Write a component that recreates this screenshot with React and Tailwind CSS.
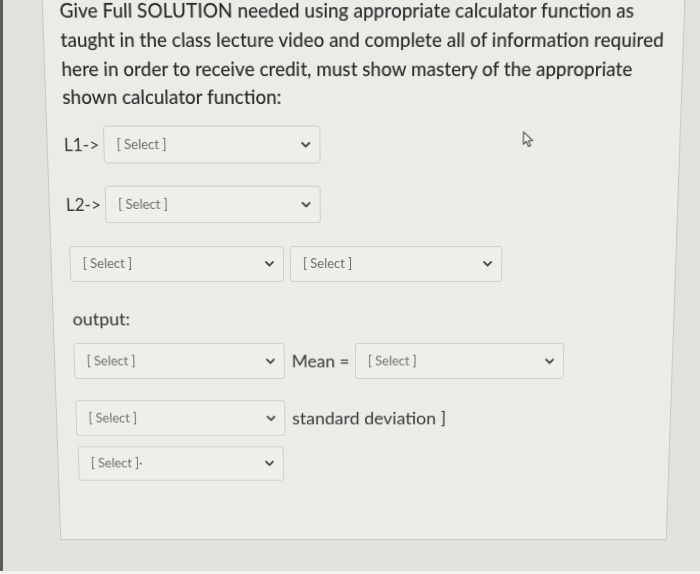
import React from "react";

const FONT = { fontFamily: "Lato, 'Open Sans', sans-serif" };

function Chevron() {
  return (
    <svg width="9" height="6" viewBox="0 0 9 6" className="shrink-0">
      <path d="M1 1l3.5 3.5L8 1" fill="none" stroke="#4b4b4b" strokeWidth="1.8" strokeLinecap="round" strokeLinejoin="round" />
    </svg>
  );
}

function Pick({ w = "w-[214px]", h = "h-[37px]", trail = "" }) {
  return (
    <div
      className={`flex ${w} ${h} shrink-0 items-center justify-between rounded-[3px] border border-[#cfcecb] bg-[#efeeeb] pl-3 pr-[9px]`}
    >
      <span className="text-[13px] text-[#6e6e6e]">
        [ Select ]{trail}
      </span>
      <Chevron />
    </div>
  );
}

function Cursor() {
  return (
    <svg width="12" height="17" viewBox="0 0 11 16" className="absolute left-[517px] top-[132px]">
      <path
        d="M1 1v11.5l2.8-2.6 2 4.6 1.9-.8-2-4.5H9.6z"
        fill="#f4f4f2"
        stroke="#5a5a5a"
        strokeWidth="1.1"
        strokeLinejoin="round"
      />
    </svg>
  );
}

export default function App() {
  return (
    <div className="flex h-[574px] w-[700px] flex-col overflow-hidden bg-[#e2e1dd]" style={FONT}>
      <div className="flex h-[571px] shrink-0">
        <div className="w-[3px] shrink-0 bg-[#5c5b56]" />
        <div className="relative h-[571px] w-[697px] shrink-0 origin-[360px_270px] [transform:perspective(1000px)_rotateX(-6.3deg)]">
          <div className="-mt-[10px] ml-[48px] flex h-[560px] w-[625px] flex-col border border-[#c9c8c4] bg-[#ecebe8] pl-4 pt-[12px] text-[#2f2f2f]">
            <p className="text-[18.5px] leading-[27.8px] text-[#2a2a2a] [font-weight:500]">
              <span className="block whitespace-nowrap">Give Full SOLUTION needed using appropriate calculator function as</span>
              <span className="block whitespace-nowrap">taught in the class lecture video and complete all of information required</span>
              <span className="block whitespace-nowrap">here in order to receive credit, must show mastery of the appropriate</span>
              <span className="block whitespace-nowrap">shown calculator function:</span>
            </p>

            <div className="mt-[13px] flex items-center gap-[2px]">
              <span className="w-[37px] text-[17px] text-[#3a3a3a]">L1-&gt;</span>
              <Pick />
            </div>

            <div className="mt-[22px] flex items-center gap-[2px]">
              <span className="w-[37px] text-[17px] text-[#3a3a3a]">L2-&gt;</span>
              <Pick />
            </div>

            <div className="ml-[2px] mt-[23px] flex items-center gap-[6px]">
              <Pick h="h-[36px]" />
              <Pick w="w-[212px]" h="h-[36px]" />
            </div>

            <p className="ml-[3px] mt-[25px] text-[18px] leading-[24px] text-[#333]">output:</p>

            <div className="ml-[3px] mt-[13px] flex items-center">
              <Pick w="w-[213px]" h="h-[37px]" />
              <span className="ml-[7px] w-[64px] text-[17.5px] text-[#3a3a3a]">Mean =</span>
              <Pick w="w-[211px]" h="h-[37px]" />
            </div>

            <div className="ml-[3px] mt-[22px] flex items-center">
              <Pick w="w-[213px]" h="h-[37px]" />
              <span className="ml-[7px] text-[18px] text-[#3a3a3a]">standard deviation ]</span>
            </div>

            <div className="ml-[4px] mt-[11px] flex items-center">
              <Pick w="w-[210px]" h="h-[36px]" trail="·" />
            </div>
          </div>
          <Cursor />
        </div>
      </div>
      <div className="h-[3px] bg-[#f3f3f1]" />
    </div>
  );
}
